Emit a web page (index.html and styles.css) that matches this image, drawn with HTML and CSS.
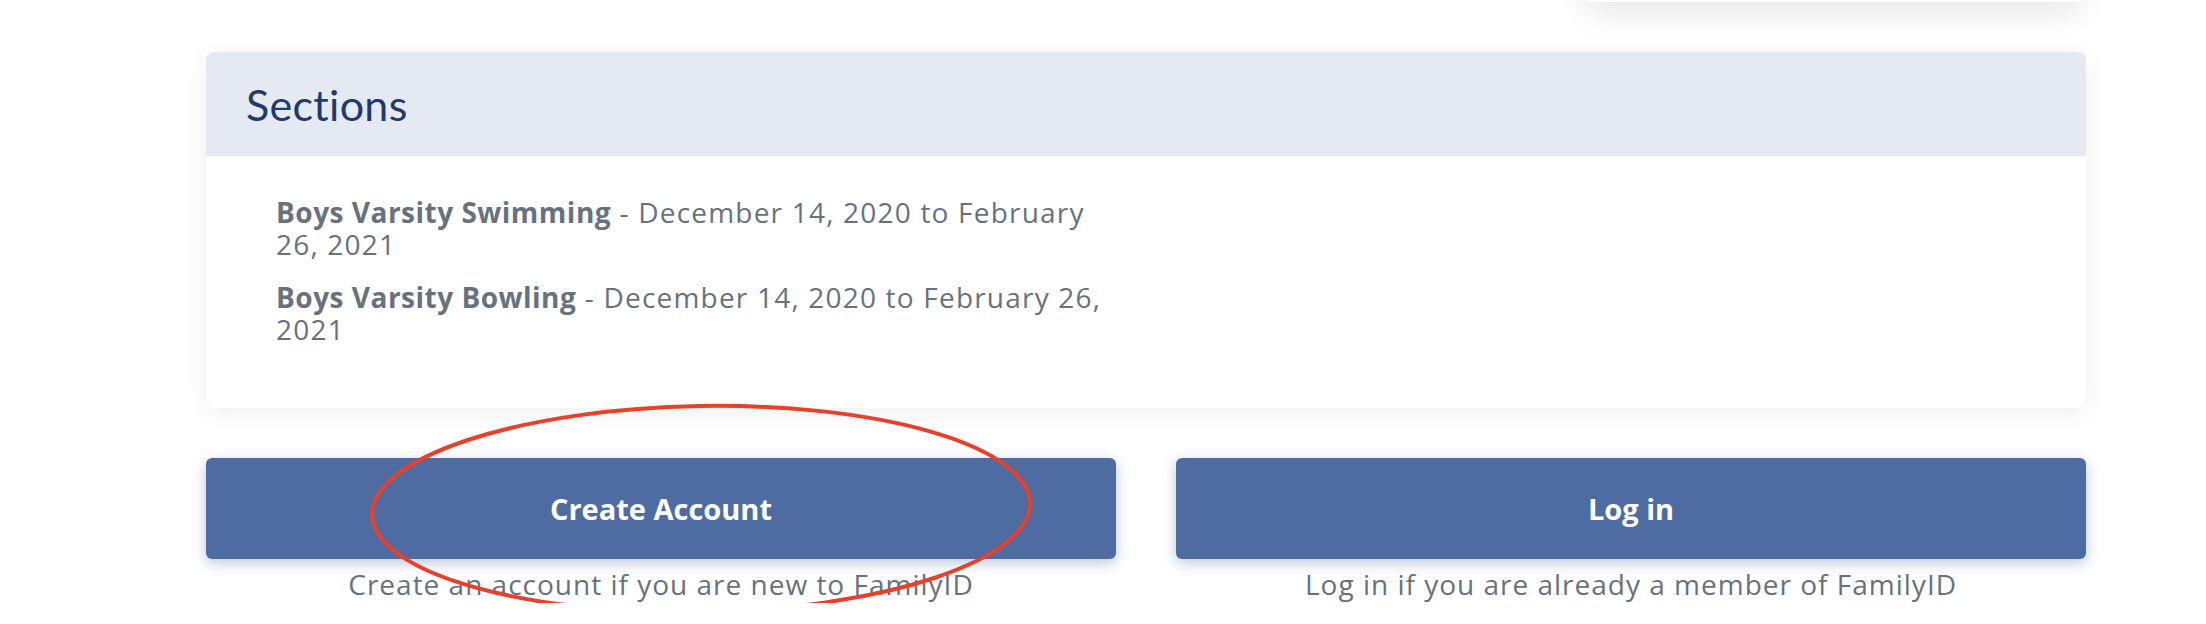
FILE: index.html
```html
<!DOCTYPE html>
<html lang="en">
<head>
    <meta charset="UTF-8">
    <meta name="viewport" content="width=device-width, initial-scale=1.0">
    <title>Program Sections</title>
    <link rel="stylesheet" href="styles.css">
</head>
<body>
    <div class="page">
        <div class="top-row">
            <div class="side-card"></div>
        </div>

        <div class="card">
            <div class="card-header">
                <h2>Sections</h2>
            </div>
            <div class="card-body">
                <ul class="section-list">
                    <li><strong>Boys Varsity Swimming</strong> - December 14, 2020 to February 26, 2021</li>
                    <li><strong>Boys Varsity Bowling</strong> - December 14, 2020 to February 26, 2021</li>
                </ul>
            </div>
        </div>

        <div class="actions">
            <div class="action">
                <button class="button">Create Account</button>
                <p class="hint">Create an account if you are new to FamilyID</p>
                <svg class="circle-mark" width="700" height="236" viewBox="0 0 700 236">
                    <ellipse cx="350" cy="118" rx="329" ry="103" fill="none" stroke="#e8402a" stroke-width="4" transform="rotate(-1 350 118)"/>
                </svg>
            </div>
            <div class="action">
                <button class="button">Log in</button>
                <p class="hint">Log in if you are already a member of FamilyID</p>
            </div>
        </div>
    </div>
</body>
</html>
```

FILE: styles.css
```css
body {
    margin: 0;
    padding: 0;
    background: #ffffff;
    font-family: "Open Sans", Lato, Arial, sans-serif;
    color: #67727e;
    overflow: hidden;
}

.page {
    margin-left: 206px;
    width: 1880px;
}

.top-row {
    display: flex;
    justify-content: flex-end;
    padding-right: 4px;
}

.side-card {
    width: 498px;
    height: 40px;
    margin-top: -38px;
    background: white;
    border-radius: 6px;
    box-shadow: 0 12px 30px rgba(0, 0, 0, 0.09);
}

.card {
    margin-top: 50px;
    background: white;
    border-radius: 8px;
    box-shadow: 0 4px 24px rgba(0, 0, 0, 0.07);
    overflow: hidden;
}

.card-header {
    background: #e5eaf2;
    height: 104px;
    display: flex;
    align-items: center;
    padding: 0 40px;
}

.card-header h2 {
    margin: 0;
    font-family: Lato, "Open Sans", sans-serif;
    font-weight: 400;
    font-size: 43px;
    color: #1f3a6d;
    letter-spacing: 0.3px;
}

.card-body {
    padding: 40px 40px 42px;
}

.section-list {
    list-style: none;
    margin: 0;
    padding: 0 30px;
    width: 850px;
    font-size: 28px;
    line-height: 32px;
    letter-spacing: 1.2px;
}

.section-list li {
    margin-bottom: 21px;
}

.section-list strong {
    font-weight: 700;
    letter-spacing: 0.5px;
}

.actions {
    margin-top: 50px;
    display: grid;
    grid-template-columns: 1fr 1fr;
    gap: 60px;
}

.action {
    position: relative;
    text-align: center;
}

.button {
    display: block;
    width: 100%;
    height: 101px;
    background: #4e6ca1;
    color: white;
    border: none;
    border-radius: 6px;
    box-shadow: 0 4px 14px rgba(60, 90, 150, 0.35);
    font-family: inherit;
    font-size: 29px;
    font-weight: 700;
    cursor: pointer;
}

.hint {
    margin: 6px 0 0;
    font-size: 28px;
    letter-spacing: 1px;
}

.circle-mark {
    position: absolute;
    left: 145px;
    top: -67px;
    pointer-events: none;
}
```
